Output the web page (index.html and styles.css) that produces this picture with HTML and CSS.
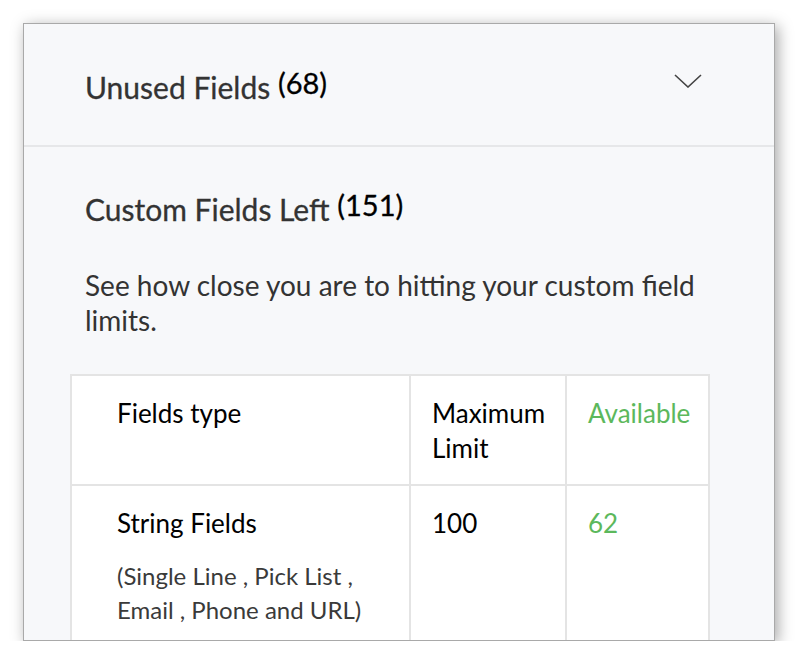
FILE: index.html
```html
<!DOCTYPE html>
<html lang="en">
<head>
<meta charset="utf-8">
<title>Custom Fields</title>
<link rel="stylesheet" href="styles.css">
</head>
<body>
<div class="panel">
  <div class="section-head">
    <h3>Unused Fields <span class="count">(68)</span></h3>
    <svg class="chevron" width="28" height="14" viewBox="0 0 28 14"><path d="M1 1 L14 13 L27 1" fill="none" stroke="#444" stroke-width="1.6"/></svg>
  </div>
  <div class="section-body">
    <h3>Custom Fields Left <span class="count">(151)</span></h3>
    <p class="desc">See how close you are to hitting your custom field limits.</p>
    <table class="limits">
      <colgroup><col class="c-type"><col class="c-max"><col class="c-avail"></colgroup>
      <tr>
        <th class="type">Fields type</th>
        <th>Maximum Limit</th>
        <th class="avail">Available</th>
      </tr>
      <tr>
        <td class="type">String Fields<span class="sub">(Single Line , Pick List , Email , Phone and URL)</span></td>
        <td>100</td>
        <td class="avail">62</td>
      </tr>
    </table>
  </div>
</div>
</body>
</html>
```

FILE: styles.css
```css
body { margin: 0; background: #fff; font-family: Lato, "Open Sans", sans-serif; }
.panel { margin: 23px 0 0 23px; width: 750px; height: 616px; overflow: hidden; background: #f7f8fa; border: 1px solid #a9a9a9; box-shadow: 3px 3px 14px rgba(0,0,0,.35); }
.section-head { height: 121px; display: flex; align-items: center; justify-content: space-between; padding: 0 72px 0 61px; border-bottom: 2px solid #e6e7e9; }
h3 { margin: 0; font-size: 30px; font-weight: 400; color: #333; -webkit-text-stroke: 0.3px #333; }
h3 .count { font-size: 29px; color: #000; vertical-align: 5px; -webkit-text-stroke: 0.3px #000; }
.chevron { display: block; margin-top: -8px; }
.section-body { padding: 40px 0 0 46px; }
.section-body h3 { padding-left: 15px; }
.desc { margin: 41px 40px 0 15px; font-size: 28px; line-height: 35px; color: #333; }
.limits { margin-top: 36px; width: 638px; table-layout: fixed; border-collapse: collapse; background: #fff; }
.c-type { width: 339px; }
.c-max { width: 156px; }
.c-avail { width: 143px; }
.limits th, .limits td { border: 2px solid #e4e4e4; text-align: left; vertical-align: top; font-size: 26px; line-height: 35px; color: #000; padding: 0 20px 0 21px; }
.limits th { font-weight: 400; height: 110px; padding-top: 20px; box-sizing: border-box; }
.limits td { padding-top: 20px; height: 160px; }
.limits .type { padding-left: 45px; }
.limits .avail { color: #5cb85c; }
.sub { display: block; margin-top: 18px; font-size: 24px; line-height: 34px; color: #3a3a3a; }
```
